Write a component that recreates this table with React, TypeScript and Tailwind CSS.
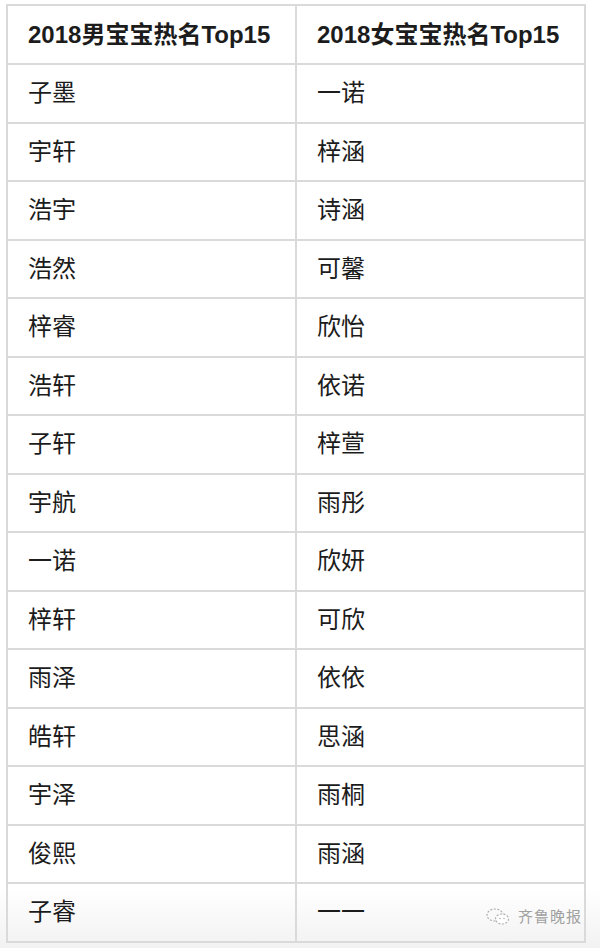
const boys = ["子墨", "宇轩", "浩宇", "浩然", "梓睿", "浩轩", "子轩", "宇航", "一诺", "梓轩", "雨泽", "皓轩", "宇泽", "俊熙", "子睿"];
const girls = ["一诺", "梓涵", "诗涵", "可馨", "欣怡", "依诺", "梓萱", "雨彤", "欣妍", "可欣", "依依", "思涵", "雨桐", "雨涵", "一一"];

const font = { fontFamily: '"Liberation Sans", "Noto Sans CJK SC", sans-serif' };

export default function App() {
  return (
    <div className="relative w-[600px] h-[948px] bg-white pl-[6px] pt-[4px]" style={font}>
      {/* soft grey fade at the bottom, behind the table */}
      <div className="absolute left-0 right-0 bottom-0 h-[60px] bg-gradient-to-b from-transparent to-[#f2f2f2]" />
      <div className="relative w-[580px] border-l-2 border-t-2 border-[#dadada] text-[#1c1c1c]">
        <div className="grid grid-cols-2 h-[59px]">
          <div className="flex items-center pl-[20px] border-r-2 border-b-2 border-[#dadada] font-bold text-[24px]">2018男宝宝热名Top15</div>
          <div className="flex items-center pl-[20px] border-r-2 border-b-2 border-[#dadada] font-bold text-[24px]">2018女宝宝热名Top15</div>
        </div>
        {boys.map((b, i) => (
          <div key={i} className="grid grid-cols-2 h-[58.5px]">
            <div className="flex items-center pl-[20px] border-r-2 border-b-2 border-[#dadada] text-[24px]">{b}</div>
            <div className="flex items-center pl-[20px] border-r-2 border-b-2 border-[#dadada] text-[24px]">{girls[i]}</div>
          </div>
        ))}
      </div>
      <div className="absolute right-[18px] bottom-[20px] flex items-center gap-[8px] text-[#a0a0a0]">
        <svg width="24" height="18" viewBox="0 0 24 18" fill="none" stroke="#b0b0b0" strokeWidth="1.2" strokeDasharray="2 1.5">
          <ellipse cx="9" cy="7" rx="8" ry="6" />
          <ellipse cx="16" cy="11" rx="6.5" ry="5" fill="white" />
          <circle cx="14" cy="10.5" r="0.8" fill="#b0b0b0" stroke="none" />
          <circle cx="18" cy="10.5" r="0.8" fill="#b0b0b0" stroke="none" />
        </svg>
        <span className="text-[15px] tracking-[1px]">齐鲁晚报</span>
      </div>
    </div>
  );
}
